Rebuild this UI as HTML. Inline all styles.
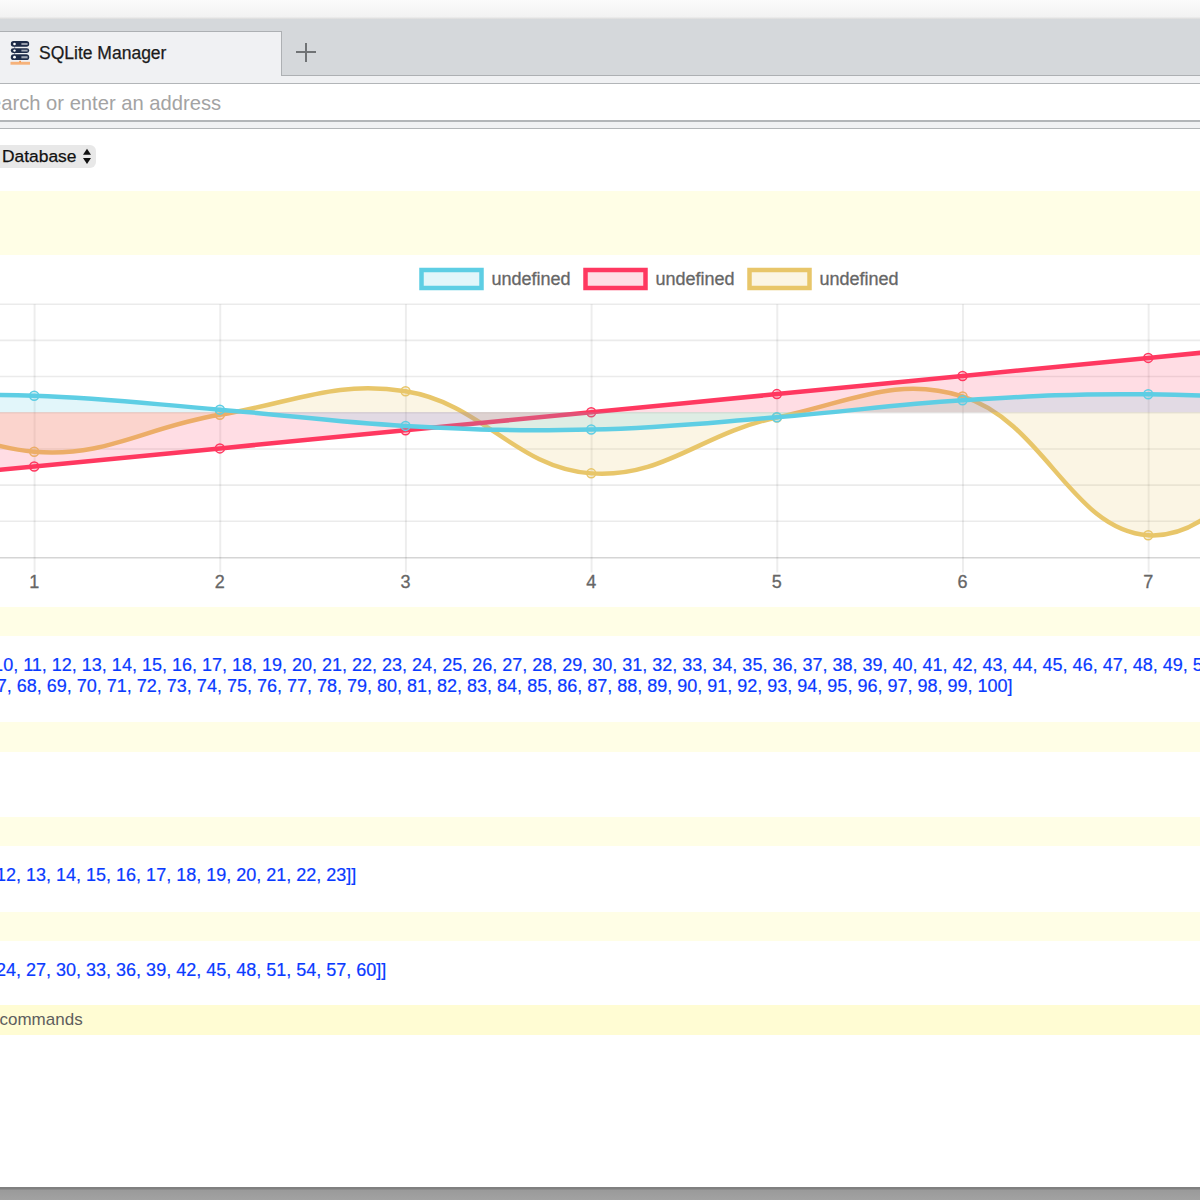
<!DOCTYPE html>
<html><head><meta charset="utf-8">
<style>
html,body{margin:0;padding:0;width:1200px;height:1200px;overflow:hidden;background:#fff;}
body{position:relative;font-family:"Liberation Sans",sans-serif;}
.abs{position:absolute;}
#top{left:0;top:0;width:1200px;height:19px;background:linear-gradient(#fbfbfb,#f2f2f2 88%,#dadada);}
#tabbar{left:0;top:19.2px;width:1200px;height:56.8px;background:#d5d8db;}
#tabline{left:281px;top:74.8px;width:919px;height:1.8px;background:#adb0b3;}
#tab{left:-2px;top:30.8px;width:284.3px;height:46px;background:#f0f1f3;border-top:1.8px solid #adb0b3;border-right:1.8px solid #adb0b3;box-sizing:border-box;}
#tabtitle{left:39px;top:45.4px;line-height:1;font-size:17.5px;color:#1b1b1b;white-space:nowrap;-webkit-text-stroke:0.25px #1b1b1b;}
#plus1{left:296px;top:51px;width:19.5px;height:2px;background:#707375;}
#plus2{left:305px;top:42.5px;width:2px;height:19px;background:#707375;}
#strip1{left:0;top:76px;width:1200px;height:7.5px;background:#f0f1f3;}
#line1{left:0;top:82.6px;width:1200px;height:1.8px;background:#b2b5b8;}
#addr{left:0;top:84.5px;width:1200px;height:36.5px;background:#fff;}
#addrtext{left:-23.5px;top:92.6px;line-height:1;font-size:20.2px;color:#a3a3a3;white-space:nowrap;}
#line2{left:0;top:120.3px;width:1200px;height:1.8px;background:#b2b5b8;}
#strip2{left:0;top:122px;width:1200px;height:6px;background:#f0f1f3;}
#line3{left:0;top:127.7px;width:1200px;height:1.7px;background:#b2b5b8;}
#sel{left:-10px;top:144.5px;width:106px;height:23px;background:#e8e8e8;border-radius:6px;}
#seltext{left:2px;top:147.6px;line-height:1;font-size:17.4px;color:#111;white-space:nowrap;-webkit-text-stroke:0.25px #111;}
.band{left:0;width:1200px;background:#fffee6;}
.blue{color:#0a3aff;font-size:18px;white-space:nowrap;-webkit-text-stroke:0.2px #0a3aff;}
#bottom{left:0;top:1187px;width:1200px;height:13px;background:linear-gradient(#808080,#808080 2px,#9a9a9a 3px,#a2a2a2);}
svg text{font-family:"Liberation Sans",sans-serif;stroke:#666;stroke-width:0.3px;}
</style></head><body>
<div class="abs" id="top"></div>
<div class="abs" id="tabbar"></div>
<div class="abs" id="tabline"></div>
<div class="abs" id="tab"></div>
<svg class="abs" style="left:9px;top:39px" width="24" height="28" viewBox="0 0 24 28">
  <rect x="5" y="6" width="1.2" height="12" fill="#9aa2b2"/>
  <rect x="1.8" y="2.1" width="18.4" height="5.7" rx="2.8" fill="#1e2b48"/>
  <rect x="1.8" y="9.3" width="18.4" height="4.6" rx="2.3" fill="#1e2b48"/>
  <rect x="1.8" y="15.2" width="18.4" height="5.9" rx="2.9" fill="#1e2b48"/>
  <circle cx="5.5" cy="5" r="1.3" fill="#fff"/>
  <circle cx="5.5" cy="11.6" r="1.2" fill="#fff"/>
  <circle cx="5.5" cy="18.2" r="1.4" fill="#fff"/>
  <rect x="12.4" y="4.1" width="6.2" height="1.8" fill="#a4a9b5"/>
  <rect x="12.4" y="10.7" width="6.2" height="1.8" fill="#a4a9b5"/>
  <rect x="12.4" y="17.2" width="6.2" height="2.1" fill="#a4a9b5"/>
  <rect x="1.5" y="22.8" width="19.5" height="2.9" fill="#f6b27a"/>
  <rect x="10.3" y="21.8" width="1.6" height="1.5" fill="#f5923a"/>
</svg>
<div class="abs" id="tabtitle">SQLite Manager</div>
<div class="abs" id="plus1"></div><div class="abs" id="plus2"></div>
<div class="abs" id="strip1"></div>
<div class="abs" id="line1"></div>
<div class="abs" id="addr"></div>
<div class="abs" id="addrtext">Search or enter an address</div>
<div class="abs" id="line2"></div>
<div class="abs" id="strip2"></div>
<div class="abs" id="line3"></div>
<div class="abs" id="sel"></div>
<div class="abs" id="seltext">Database</div>
<svg class="abs" style="left:82px;top:148px" width="10" height="17" viewBox="0 0 10 17">
  <path d="M1 6.7 L5 0.8 L9 6.7 Z" fill="#111"/><path d="M1 10 L5 15.9 L9 10 Z" fill="#111"/>
</svg>
<div class="abs band" style="top:190.8px;height:64.2px"></div>
<div class="abs band" style="top:607px;height:29px"></div>
<div class="abs band" style="top:722px;height:30px"></div>
<div class="abs band" style="top:816.5px;height:29.5px"></div>
<div class="abs band" style="top:911.5px;height:29.5px"></div>
<div class="abs band" style="top:1005.4px;height:30px;background:#fffcd3"></div>
<svg class="abs" style="left:0;top:0" width="1200" height="1200">
<line x1="0" x2="1200" y1="304.20" y2="304.20" stroke="rgba(0,0,0,0.08)" stroke-width="1.6"/>
<line x1="0" x2="1200" y1="340.39" y2="340.39" stroke="rgba(0,0,0,0.08)" stroke-width="1.6"/>
<line x1="0" x2="1200" y1="376.57" y2="376.57" stroke="rgba(0,0,0,0.08)" stroke-width="1.6"/>
<line x1="0" x2="1200" y1="412.76" y2="412.76" stroke="rgba(0,0,0,0.08)" stroke-width="1.6"/>
<line x1="0" x2="1200" y1="448.94" y2="448.94" stroke="rgba(0,0,0,0.08)" stroke-width="1.6"/>
<line x1="0" x2="1200" y1="485.13" y2="485.13" stroke="rgba(0,0,0,0.08)" stroke-width="1.6"/>
<line x1="0" x2="1200" y1="521.31" y2="521.31" stroke="rgba(0,0,0,0.08)" stroke-width="1.6"/>
<line x1="0" x2="1200" y1="557.70" y2="557.70" stroke="rgba(0,0,0,0.165)" stroke-width="1.6"/>
<line x1="34.60" x2="34.60" y1="304.20" y2="572.50" stroke="rgba(0,0,0,0.07)" stroke-width="2"/>
<line x1="220.27" x2="220.27" y1="304.20" y2="572.50" stroke="rgba(0,0,0,0.07)" stroke-width="2"/>
<line x1="405.94" x2="405.94" y1="304.20" y2="572.50" stroke="rgba(0,0,0,0.07)" stroke-width="2"/>
<line x1="591.61" x2="591.61" y1="304.20" y2="572.50" stroke="rgba(0,0,0,0.07)" stroke-width="2"/>
<line x1="777.28" x2="777.28" y1="304.20" y2="572.50" stroke="rgba(0,0,0,0.07)" stroke-width="2"/>
<line x1="962.95" x2="962.95" y1="304.20" y2="572.50" stroke="rgba(0,0,0,0.07)" stroke-width="2"/>
<line x1="1148.62" x2="1148.62" y1="304.20" y2="572.50" stroke="rgba(0,0,0,0.07)" stroke-width="2"/>
<text x="34.20" y="588" text-anchor="middle" font-size="18" fill="#666">1</text>
<text x="219.87" y="588" text-anchor="middle" font-size="18" fill="#666">2</text>
<text x="405.54" y="588" text-anchor="middle" font-size="18" fill="#666">3</text>
<text x="591.21" y="588" text-anchor="middle" font-size="18" fill="#666">4</text>
<text x="776.88" y="588" text-anchor="middle" font-size="18" fill="#666">5</text>
<text x="962.55" y="588" text-anchor="middle" font-size="18" fill="#666">6</text>
<text x="1148.22" y="588" text-anchor="middle" font-size="18" fill="#666">7</text>
<path d="M-151.47 384.02 C-151.47 384.02 -41.67 445.45 34.20 451.74 C106.87 457.76 145.18 426.95 219.87 414.78 C293.71 402.75 334.29 380.01 405.54 391.25 C482.83 403.44 515.24 468.01 591.21 473.37 C663.77 478.49 701.24 433.14 776.88 417.47 C849.77 402.36 896.26 375.41 962.55 396.43 C1044.79 422.52 1071.72 530.31 1148.22 535.24 C1220.26 539.89 1253.83 449.44 1333.89 420.38 C1402.37 395.53 1519.56 400.47 1519.56 400.47 L1519.56 412.20 L-151.47 412.20 Z" fill="rgba(232,198,106,0.18)" stroke="none"/>
<path d="M-151.47 384.02 C-151.47 384.02 -41.67 445.45 34.20 451.74 C106.87 457.76 145.18 426.95 219.87 414.78 C293.71 402.75 334.29 380.01 405.54 391.25 C482.83 403.44 515.24 468.01 591.21 473.37 C663.77 478.49 701.24 433.14 776.88 417.47 C849.77 402.36 896.26 375.41 962.55 396.43 C1044.79 422.52 1071.72 530.31 1148.22 535.24 C1220.26 539.89 1253.83 449.44 1333.89 420.38 C1402.37 395.53 1519.56 400.47 1519.56 400.47" fill="none" stroke="rgb(232,198,106)" stroke-width="4.5"/>
<circle cx="34.20" cy="451.74" r="4.5" fill="rgba(232,198,106,0.18)" stroke="rgb(232,198,106)" stroke-width="1.5"/>
<circle cx="219.87" cy="414.78" r="4.5" fill="rgba(232,198,106,0.18)" stroke="rgb(232,198,106)" stroke-width="1.5"/>
<circle cx="405.54" cy="391.25" r="4.5" fill="rgba(232,198,106,0.18)" stroke="rgb(232,198,106)" stroke-width="1.5"/>
<circle cx="591.21" cy="473.37" r="4.5" fill="rgba(232,198,106,0.18)" stroke="rgb(232,198,106)" stroke-width="1.5"/>
<circle cx="776.88" cy="417.47" r="4.5" fill="rgba(232,198,106,0.18)" stroke="rgb(232,198,106)" stroke-width="1.5"/>
<circle cx="962.55" cy="396.43" r="4.5" fill="rgba(232,198,106,0.18)" stroke="rgb(232,198,106)" stroke-width="1.5"/>
<circle cx="1148.22" cy="535.24" r="4.5" fill="rgba(232,198,106,0.18)" stroke="rgb(232,198,106)" stroke-width="1.5"/>
<path d="M-151.47 484.58 C-151.47 484.58 -40.07 473.72 34.20 466.49 C108.47 459.25 145.60 455.63 219.87 448.39 C294.14 441.15 331.27 437.53 405.54 430.29 C479.81 423.06 516.94 419.44 591.21 412.20 C665.48 404.96 702.61 401.34 776.88 394.11 C851.15 386.87 888.28 383.25 962.55 376.01 C1036.82 368.77 1073.95 365.15 1148.22 357.91 C1222.49 350.68 1259.62 347.06 1333.89 339.82 C1408.16 332.58 1519.56 321.73 1519.56 321.73 L1519.56 412.20 L-151.47 412.20 Z" fill="rgba(255,56,96,0.17)" stroke="none"/>
<path d="M-151.47 484.58 C-151.47 484.58 -40.07 473.72 34.20 466.49 C108.47 459.25 145.60 455.63 219.87 448.39 C294.14 441.15 331.27 437.53 405.54 430.29 C479.81 423.06 516.94 419.44 591.21 412.20 C665.48 404.96 702.61 401.34 776.88 394.11 C851.15 386.87 888.28 383.25 962.55 376.01 C1036.82 368.77 1073.95 365.15 1148.22 357.91 C1222.49 350.68 1259.62 347.06 1333.89 339.82 C1408.16 332.58 1519.56 321.73 1519.56 321.73" fill="none" stroke="rgb(255,56,96)" stroke-width="4.5"/>
<circle cx="34.20" cy="466.49" r="4.5" fill="rgba(255,56,96,0.17)" stroke="rgb(255,56,96)" stroke-width="1.5"/>
<circle cx="219.87" cy="448.39" r="4.5" fill="rgba(255,56,96,0.17)" stroke="rgb(255,56,96)" stroke-width="1.5"/>
<circle cx="405.54" cy="430.29" r="4.5" fill="rgba(255,56,96,0.17)" stroke="rgb(255,56,96)" stroke-width="1.5"/>
<circle cx="591.21" cy="412.20" r="4.5" fill="rgba(255,56,96,0.17)" stroke="rgb(255,56,96)" stroke-width="1.5"/>
<circle cx="776.88" cy="394.11" r="4.5" fill="rgba(255,56,96,0.17)" stroke="rgb(255,56,96)" stroke-width="1.5"/>
<circle cx="962.55" cy="376.01" r="4.5" fill="rgba(255,56,96,0.17)" stroke="rgb(255,56,96)" stroke-width="1.5"/>
<circle cx="1148.22" cy="357.91" r="4.5" fill="rgba(255,56,96,0.17)" stroke="rgb(255,56,96)" stroke-width="1.5"/>
<path d="M-151.47 396.97 C-151.47 396.97 -39.97 393.22 34.20 395.75 C108.57 398.28 145.64 403.62 219.87 409.65 C294.18 415.68 331.14 421.91 405.54 425.89 C479.67 429.87 517.02 431.28 591.21 429.55 C665.55 427.82 702.68 423.10 776.88 417.26 C851.22 411.40 888.15 404.91 962.55 400.31 C1036.68 395.73 1073.99 393.41 1148.22 394.30 C1222.53 395.18 1259.72 399.20 1333.89 404.74 C1408.26 410.30 1519.56 422.04 1519.56 422.04 L1519.56 412.20 L-151.47 412.20 Z" fill="rgba(94,206,228,0.18)" stroke="none"/>
<path d="M-151.47 396.97 C-151.47 396.97 -39.97 393.22 34.20 395.75 C108.57 398.28 145.64 403.62 219.87 409.65 C294.18 415.68 331.14 421.91 405.54 425.89 C479.67 429.87 517.02 431.28 591.21 429.55 C665.55 427.82 702.68 423.10 776.88 417.26 C851.22 411.40 888.15 404.91 962.55 400.31 C1036.68 395.73 1073.99 393.41 1148.22 394.30 C1222.53 395.18 1259.72 399.20 1333.89 404.74 C1408.26 410.30 1519.56 422.04 1519.56 422.04" fill="none" stroke="rgb(94,206,228)" stroke-width="4.5"/>
<circle cx="34.20" cy="395.75" r="4.5" fill="rgba(94,206,228,0.18)" stroke="rgb(94,206,228)" stroke-width="1.5"/>
<circle cx="219.87" cy="409.65" r="4.5" fill="rgba(94,206,228,0.18)" stroke="rgb(94,206,228)" stroke-width="1.5"/>
<circle cx="405.54" cy="425.89" r="4.5" fill="rgba(94,206,228,0.18)" stroke="rgb(94,206,228)" stroke-width="1.5"/>
<circle cx="591.21" cy="429.55" r="4.5" fill="rgba(94,206,228,0.18)" stroke="rgb(94,206,228)" stroke-width="1.5"/>
<circle cx="776.88" cy="417.26" r="4.5" fill="rgba(94,206,228,0.18)" stroke="rgb(94,206,228)" stroke-width="1.5"/>
<circle cx="962.55" cy="400.31" r="4.5" fill="rgba(94,206,228,0.18)" stroke="rgb(94,206,228)" stroke-width="1.5"/>
<circle cx="1148.22" cy="394.30" r="4.5" fill="rgba(94,206,228,0.18)" stroke="rgb(94,206,228)" stroke-width="1.5"/>
<rect x="421.5" y="270" width="60" height="18" fill="rgba(94,206,228,0.18)" stroke="rgb(94,206,228)" stroke-width="4.5"/>
<text x="491.5" y="284.8" font-size="18" fill="#666">undefined</text>
<rect x="585.5" y="270" width="60" height="18" fill="rgba(255,56,96,0.17)" stroke="rgb(255,56,96)" stroke-width="4.5"/>
<text x="655.5" y="284.8" font-size="18" fill="#666">undefined</text>
<rect x="749.5" y="270" width="60" height="18" fill="rgba(232,198,106,0.18)" stroke="rgb(232,198,106)" stroke-width="4.5"/>
<text x="819.5" y="284.8" font-size="18" fill="#666">undefined</text>
</svg>
<div class="abs blue" style="left:-192px;top:655px">[1, 2, 3, 4, 5, 6, 7, 8, 9, 10, 11, 12, 13, 14, 15, 16, 17, 18, 19, 20, 21, 22, 23, 24, 25, 26, 27, 28, 29, 30, 31, 32, 33, 34, 35, 36, 37, 38, 39, 40, 41, 42, 43, 44, 45, 46, 47, 48, 49, 50, 51, 52, 53, 54, 55, 56, 57, 58, 59, 60, 61, 62, 63, 64, 65, 66,</div>
<div class="abs blue" style="left:-13.3px;top:676.2px">67, 68, 69, 70, 71, 72, 73, 74, 75, 76, 77, 78, 79, 80, 81, 82, 83, 84, 85, 86, 87, 88, 89, 90, 91, 92, 93, 94, 95, 96, 97, 98, 99, 100]</div>
<div class="abs blue" style="left:-4px;top:864.5px">12, 13, 14, 15, 16, 17, 18, 19, 20, 21, 22, 23]]</div>
<div class="abs blue" style="left:-4px;top:959.5px">24, 27, 30, 33, 36, 39, 42, 45, 48, 51, 54, 57, 60]]</div>
<div class="abs" style="left:-0.5px;top:1009.5px;font-size:17px;color:#5e5e5e;white-space:nowrap">commands</div>
<div class="abs" id="bottom"></div>
</body></html>
